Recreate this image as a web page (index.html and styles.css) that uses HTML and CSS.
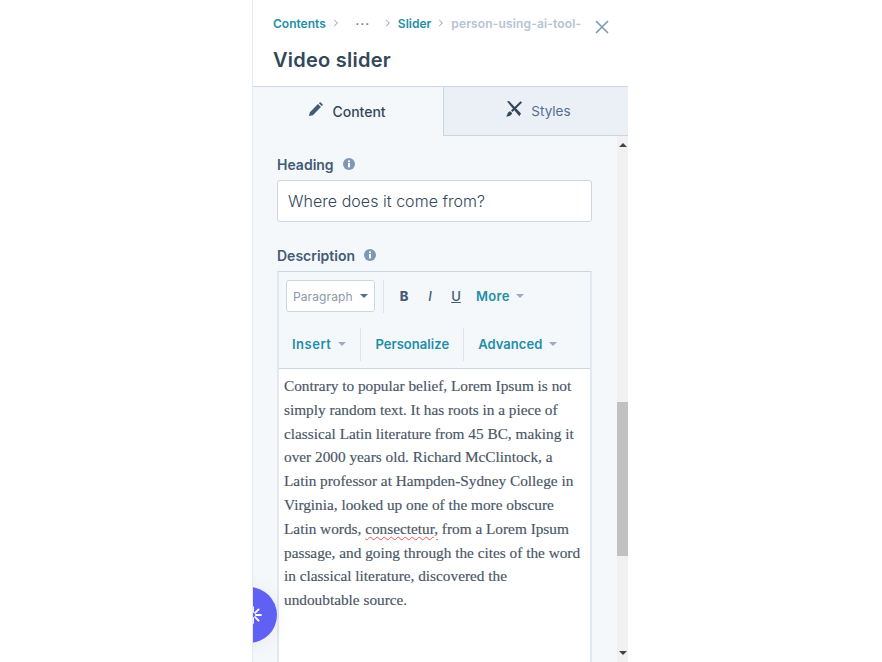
FILE: index.html
```html
<!DOCTYPE html>
<html lang="en">
<head>
<meta charset="utf-8">
<title>Video slider</title>
<link rel="stylesheet" href="styles.css">
</head>
<body>
<div class="panel">
  <header class="head">
    <div class="crumbs-row">
      <nav class="crumbs">
        <a class="crumb">Contents</a>
        <svg class="chev chev-1" viewBox="0 0 6 8"><path d="M1.2 1 4.4 4 1.2 7" fill="none" stroke="#8ea0b4" stroke-width="1"/></svg>
        <span class="dots">•••</span>
        <svg class="chev chev-2" viewBox="0 0 6 8"><path d="M1.2 1 4.4 4 1.2 7" fill="none" stroke="#8ea0b4" stroke-width="1"/></svg>
        <a class="crumb">Slider</a>
        <svg class="chev chev-3" viewBox="0 0 6 8"><path d="M1.2 1 4.4 4 1.2 7" fill="none" stroke="#8ea0b4" stroke-width="1"/></svg>
        <span class="crumb-current">person-using-ai-tool-</span>
      </nav>
      <svg class="close" viewBox="0 0 14 14"><path d="M1 1 13 13M13 1 1 13" fill="none" stroke="#7c98b6" stroke-width="1.6"/></svg>
    </div>
    <h1 class="title">Video slider</h1>
  </header>
  <div class="tabs">
    <div class="tab tab-active">
      <svg class="tab-icon" viewBox="0 0 16 16"><path d="M1 15l1-4.2L10.6 2.2l3.2 3.2L5.2 14zM11.6 1.2l.9-.7c.4-.3.9-.3 1.2 0l1.8 1.8c.3.3.3.8 0 1.2l-.7.9z" fill="#425b76"/></svg>
      <span>Content</span>
    </div>
    <div class="tab tab-idle">
      <svg class="tab-icon tab-icon-x" viewBox="0 0 18 16"><path d="M2 .5 4 0l12 12.6-1.6 2.6zM15.5.2l1.6 1.4L7.5 11 6 9.5z" fill="#33475b"/><path d="M5.2 10.2l2 2c-.6 2-2.8 3.4-6.2 3.2 1.4-1 1.2-2.2 1.8-3.4.5-1 1.3-1.5 2.4-1.8z" fill="#33475b"/></svg>
      <span>Styles</span>
    </div>
  </div>
  <div class="body">
    <main class="form">
      <div class="label-row heading-label">
        <label class="label">Heading</label>
        <svg class="info" viewBox="0 0 12 12"><circle cx="6" cy="6" r="6" fill="#7c98b6"/><rect x="5" y="5" width="2" height="4.4" fill="#fff"/><rect x="5" y="2.4" width="2" height="1.8" fill="#fff"/></svg>
      </div>
      <div class="input">Where does it come from?</div>
      <div class="label-row desc-label">
        <label class="label">Description</label>
        <svg class="info" viewBox="0 0 12 12"><circle cx="6" cy="6" r="6" fill="#7c98b6"/><rect x="5" y="5" width="2" height="4.4" fill="#fff"/><rect x="5" y="2.4" width="2" height="1.8" fill="#fff"/></svg>
      </div>
      <div class="editor">
        <div class="toolbar">
          <div class="tool-row row-one">
            <div class="select">
              <span>Paragraph</span>
              <i class="caret caret-dark"></i>
            </div>
            <i class="sep sep-one"></i>
            <b class="fmt fmt-b">B</b>
            <em class="fmt fmt-i">I</em>
            <u class="fmt fmt-u">U</u>
            <a class="tool-link more">More<i class="caret"></i></a>
          </div>
          <div class="tool-row row-two">
            <a class="tool-link insert">Insert<i class="caret"></i></a>
            <i class="sep"></i>
            <a class="tool-link personalize">Personalize</a>
            <i class="sep"></i>
            <a class="tool-link advanced">Advanced<i class="caret"></i></a>
          </div>
        </div>
        <div class="text">Contrary to popular belief, Lorem Ipsum is not<br>simply random text. It has roots in a piece of<br>classical Latin literature from 45 BC, making it<br>over 2000 years old. Richard McClintock, a<br>Latin professor at Hampden-Sydney College in<br>Virginia, looked up one of the more obscure<br>Latin words, <span class="misspelt">consectetur,</span> from a Lorem Ipsum<br>passage, and going through the cites of the word<br>in classical literature, discovered the<br>undoubtable source.</div>
      </div>
    </main>
    <div class="scrollbar">
      <i class="arrow arrow-up"></i>
      <i class="thumb"></i>
      <i class="arrow arrow-down"></i>
    </div>
  </div>
  <button class="fab" aria-label="Assistant">
    <svg viewBox="0 0 24 24"><g stroke="#fff" stroke-width="2.2" stroke-linecap="round"><path d="M12 2.500v6M12 15.500v6M2.500 12h6M15.500 12h6M5.300 5.300l4.200 4.200M14.500 14.500l4.200 4.200M18.700 5.300l-4.200 4.200M9.500 14.500l-4.200 4.200"/></g></svg>
  </button>
</div>
</body>
</html>
```
FILE: styles.css
```css
* { box-sizing: border-box; }
html, body { margin: 0; height: 100%; overflow: hidden; background: #fff; }
body { padding-left: 252px; font-family: "Inter", "Liberation Sans", sans-serif; color: #33475b; }
.panel { position: relative; width: 376px; height: 662px; overflow: hidden; display: flex; flex-direction: column; border-left: 1px solid #e5eaf1; }

.head { height: 87px; background: #fff; padding: 16px 0 0 20px; border-bottom: 1px solid #cbd6e2; flex: none; }
.crumbs-row { display: flex; align-items: flex-start; height: 26px; }
.crumbs { display: flex; align-items: center; height: 14px; width: 310px; font-size: 12px; font-weight: 600; white-space: nowrap; }
.crumb { color: #1f8ea8; }
.crumb-current { color: #b6c3d4; margin-left: 7px; letter-spacing: .15px; }
.chev { width: 6px; height: 8px; margin-left: 7px; }
.dots { font-size: 6px; color: #516f90; margin-left: 17px; letter-spacing: 2px; }
.chev-2 { margin-left: 14px; margin-right: 7px; }
.close { width: 14px; height: 14px; margin: 4px 0 0 12px; flex: none; }
.title { margin: 5px 0 0; font-size: 20px; line-height: 26px; font-weight: 600; color: #33475b; letter-spacing: .25px; }

.tabs { display: flex; height: 49px; flex: none; }
.tab { display: flex; align-items: center; justify-content: center; font-size: 14px; padding-bottom: 1px; }
.tab-active { width: 191px; background: #f5f8fa; border-right: 1px solid #cbd6e2; color: #33475b; gap: 9px; padding-right: 2px; font-weight: 500; }
.tab-idle { flex: 1; background: #eaf0f6; border-bottom: 1px solid #cbd6e2; color: #516f90; gap: 8px; padding-left: 4px; font-size: 13.500px; }
.tab-icon { width: 15px; height: 15px; margin-bottom: 4px; }
.tab-icon-x { width: 18px; height: 16px; }

.body { flex: 1; display: flex; min-height: 0; background: #f5f8fa; }
.form { flex: 1; padding: 0 25px 0 24px; min-width: 0; }
.label-row { display: flex; align-items: center; gap: 9px; height: 18px; }
.heading-label { margin-top: 19px; }
.desc-label { margin-top: 24px; }
.label { font-size: 14px; font-weight: 600; color: #425b76; }
.info { width: 12px; height: 12px; }

.input { margin-top: 7px; height: 42px; background: #fff; border: 1px solid #cbd6e2; border-radius: 3px; padding-left: 10px; font-size: 16px; font-weight: 300; line-height: 40px; color: #33475b; letter-spacing: .04px; }

.editor { margin-top: 7px; border-style: solid; border-width: 1px 2px 0; border-color: #cbd6e2 #e2e8ef; }
.toolbar { background: #f5f8fa; height: 97px; border-bottom: 1px solid #cbd6e2; }
.tool-row { display: flex; align-items: center; }
.row-one { height: 48px; padding: 0 0 0 7px; }
.row-two { height: 48px; padding: 0 0 0 13px; }
.select { width: 89px; height: 32px; background: #fff; border: 1px solid #cbd6e2; border-radius: 3px; display: flex; align-items: center; justify-content: space-between; padding: 0 6px 0 6px; font-size: 12px; color: #8d99a6; letter-spacing: .1px; }
.sep { display: block; width: 1px; height: 33px; background: #dfe3eb; flex: none; }
.sep-one { margin-left: 8px; }
.fmt { font-size: 13px; color: #425b76; width: 14px; text-align: center; font-style: normal; line-height: 1; }
.fmt-b { margin-left: 13px; font-weight: 800; }
.fmt-i { margin-left: 12px; font-style: italic; font-weight: 500; }
.fmt-u { margin-left: 12px; font-weight: 500; }
.tool-link { display: inline-flex; align-items: center; gap: 6px; font-size: 13px; font-weight: 600; color: #1f8ea8; letter-spacing: .05px; }
.more { margin-left: 13px; letter-spacing: .3px; }
.insert { letter-spacing: .5px; }
.row-two .sep { margin: 0 14px; }
.insert .caret, .advanced .caret { margin-left: 1px; }
.caret { display: inline-block; width: 0; height: 0; border: 4.5px solid transparent; border-top-color: #99acc2; border-bottom: 0; }
.caret-dark { border-top-color: #516f90; }

.text { background: #fff; height: 300px; padding: 5px 5px; font-family: "Liberation Serif", serif; font-size: 15.3px; line-height: 23.8px; color: #485566; white-space: nowrap; -webkit-text-stroke: .15px #485566; }
.misspelt { text-decoration: underline wavy #f2545b 1.3px; text-underline-offset: 2px; }

.scrollbar { width: 11px; flex: none; background: #f1f1f1; display: flex; flex-direction: column; align-items: center; }
.arrow { display: block; width: 0; height: 0; border: 4px solid transparent; flex: none; }
.arrow-up { border-bottom-color: #444; border-top: 0; margin-top: 7px; }
.thumb { display: block; width: 11px; height: 154px; background: #c1c1c1; margin-top: 255px; flex: none; }
.arrow-down { border-top-color: #444; border-bottom: 0; margin-top: 95px; }

.fab { position: absolute; left: -32px; top: 587px; width: 56px; height: 56px; padding: 0 0 0 8px; border: 0; border-radius: 50%; background: #6160f5; display: flex; align-items: center; justify-content: center; box-shadow: 0 2px 20px rgba(0,0,0,.06); }
.fab svg { width: 20px; height: 20px; flex: none; }
```
